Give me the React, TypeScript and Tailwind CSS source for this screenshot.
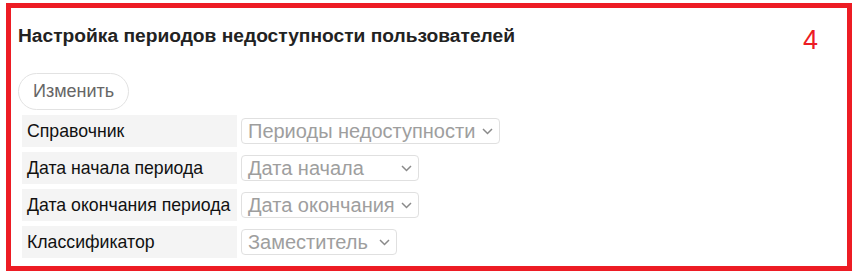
const rows = [
  { label: 'Справочник', value: 'Периоды недоступности', width: 'w-[259px]' },
  { label: 'Дата начала периода', value: 'Дата начала', width: 'w-[178px]' },
  { label: 'Дата окончания периода', value: 'Дата окончания', width: 'w-[178px]' },
  { label: 'Классификатор', value: 'Заместитель', width: 'w-[156px]' },
];

export default function App() {
  return (
    <div className="w-[856px] h-[274px] bg-white pt-[3px] pl-[6px] font-['Liberation_Sans',Arial,sans-serif]">
      <div className="relative w-[846px] h-[268px] border-[5px] border-[#ed1c24] pl-[7px]">
        <h1 className="pt-[16px] text-[19.2px] leading-[24px] font-bold text-[#222]">
          Настройка периодов недоступности пользователей
        </h1>
        <span className="absolute right-[29px] top-[16px] text-[27px] leading-[32px] text-[#ed1c24]">
          4
        </span>
        <button className="mt-[25px] h-[37px] px-[14px] rounded-full border border-[#e2e2e2] bg-white text-[18px] text-[#666]">
          Изменить
        </button>
        <div className="grid grid-cols-[215px_auto] gap-x-[4px] gap-y-[5px] pt-[5px] pl-[4px] justify-start">
          {rows.map((r) => (
            <FieldRow key={r.label} {...r} />
          ))}
        </div>
      </div>
    </div>
  );
}

function FieldRow({ label, value, width }: { label: string; value: string; width: string }) {
  return (
    <>
      <div className="h-[32px] bg-[#f4f4f4] flex items-center pl-[5px] text-[17.7px] text-[#111]">
        {label}
      </div>
      <div className="flex items-center">
        <div
          className={`${width} h-[26px] border border-[#e0e0e0] rounded-[4px] flex items-center justify-between pl-[6px] pr-[6px] text-[20px] text-[#9e9e9e]`}
        >
          <span className="whitespace-nowrap">{value}</span>
          <svg width="11" height="7" viewBox="0 0 11 7" className="shrink-0">
            <path d="M1 1l4.5 4.5L10 1" fill="none" stroke="#8a8a8a" strokeWidth="1.5" />
          </svg>
        </div>
      </div>
    </>
  );
}
